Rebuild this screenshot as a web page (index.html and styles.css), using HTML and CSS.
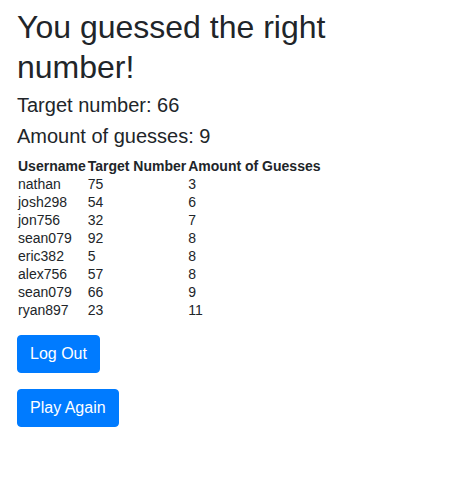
FILE: index.html
```html
<!DOCTYPE html>
<html>
<head>
<meta charset="utf-8">
<link rel="stylesheet" href="styles.css">
</head>
<body>
<main class="page">
  <h1 class="title">You guessed the right number!</h1>
  <p class="stat">Target number: 66</p>
  <p class="stat stat-last">Amount of guesses: 9</p>
  <table class="scores">
    <thead>
      <tr><th>Username</th><th>Target Number</th><th>Amount of Guesses</th></tr>
    </thead>
    <tbody>
      <tr><td>nathan</td><td>75</td><td>3</td></tr>
      <tr><td>josh298</td><td>54</td><td>6</td></tr>
      <tr><td>jon756</td><td>32</td><td>7</td></tr>
      <tr><td>sean079</td><td>92</td><td>8</td></tr>
      <tr><td>eric382</td><td>5</td><td>8</td></tr>
      <tr><td>alex756</td><td>57</td><td>8</td></tr>
      <tr><td>sean079</td><td>66</td><td>9</td></tr>
      <tr><td>ryan897</td><td>23</td><td>11</td></tr>
    </tbody>
  </table>
  <div class="actions">
    <button class="btn">Log Out</button>
    <button class="btn">Play Again</button>
  </div>
</main>
</body>
</html>
```
FILE: styles.css
```css
html, body {
  margin: 0;
  padding: 0;
  background: #fff;
}
body {
  font-family: "Liberation Sans", Arial, sans-serif;
  color: #212529;
}
.page {
  padding: 7px 17px;
  width: 340px;
}
.title {
  font-size: 32px;
  font-weight: 400;
  line-height: 40px;
  margin: 0 0 6px 0;
}
.stat {
  font-size: 20px;
  line-height: 24px;
  margin: 0 0 7px 0;
}
.stat-last {
  margin-bottom: 9px;
}
.scores {
  border-collapse: collapse;
  font-size: 14px;
  line-height: 18px;
  margin-top: 0;
}
.scores th, .scores td {
  padding: 0 1px;
  text-align: left;
  vertical-align: top;
}
.scores th {
  font-weight: 700;
}
.actions {
  display: flex;
  flex-direction: column;
  align-items: flex-start;
  gap: 16px;
  margin-top: 16px;
}
.btn {
  font-family: "Liberation Sans", Arial, sans-serif;
  font-size: 16px;
  line-height: 24px;
  padding: 6px 12px;
  border: 1px solid #007bff;
  border-radius: 4px;
  background: #007bff;
  color: #fff;
}
```
